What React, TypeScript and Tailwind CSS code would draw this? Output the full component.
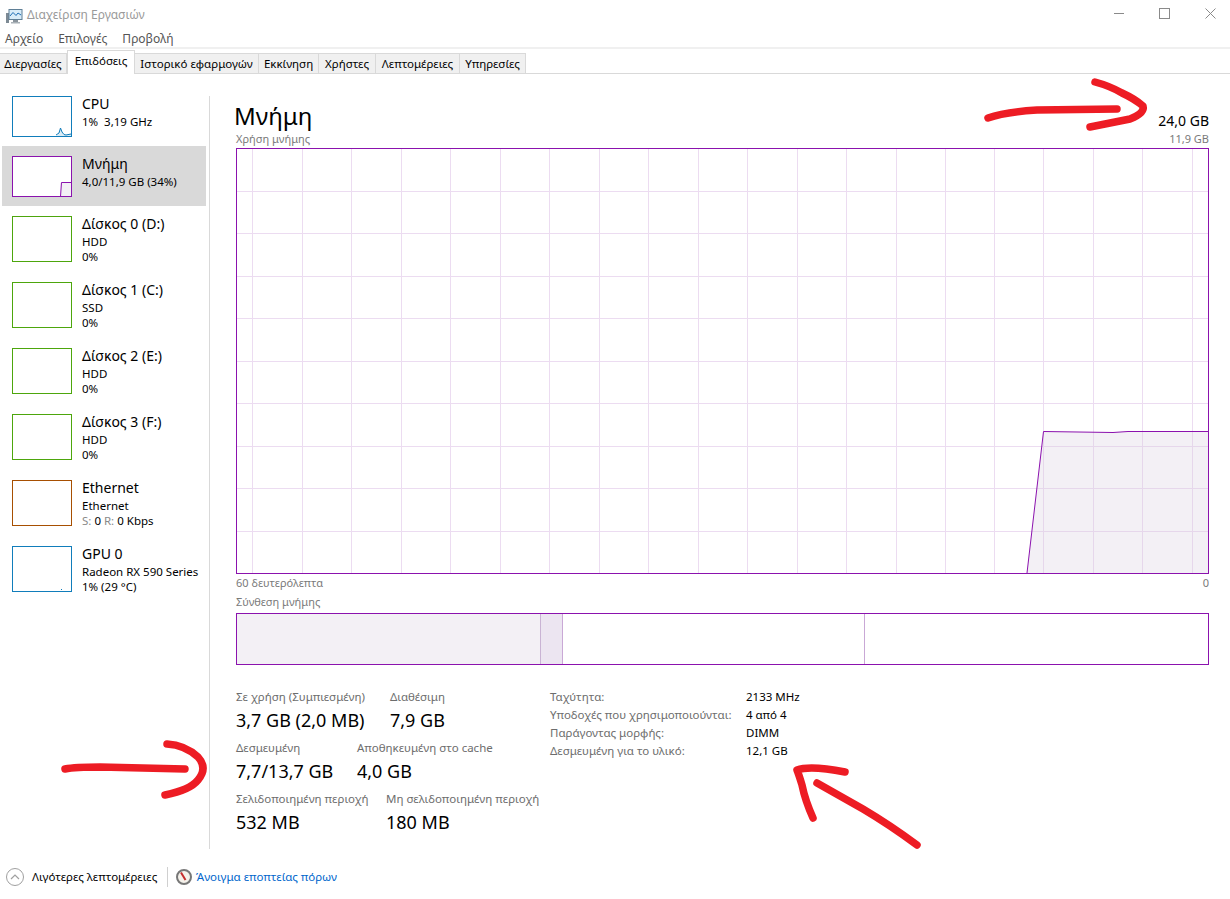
const PURPLE = "#8b12ae";

function Thumb({ color, tall, children }: { color: string; tall?: boolean; children?: React.ReactNode }) {
  return (
    <svg width="60" height={tall ? 46 : 41} className="block shrink-0 bg-white">
      {children}
      <rect x="0.5" y="0.5" width="59" height={tall ? 45 : 40} fill="none" stroke={color} />
    </svg>
  );
}

const rows = [
  { t: "Δίσκος 0 (D:)", a: "HDD", b: "0%", c: "#4da60c" },
  { t: "Δίσκος 1 (C:)", a: "SSD", b: "0%", c: "#4da60c" },
  { t: "Δίσκος 2 (E:)", a: "HDD", b: "0%", c: "#4da60c" },
  { t: "Δίσκος 3 (F:)", a: "HDD", b: "0%", c: "#4da60c" },
];

function SideRow({ t, a, b, c, gpu }: { t: string; a: React.ReactNode; b: React.ReactNode; c: string; gpu?: boolean }) {
  return (
    <div className="flex h-[66px] pt-[10px] pl-[12px]">
      <Thumb color={c} tall>
        {gpu && <rect x="49" y="43" width="1" height="1" fill={c} />}
      </Thumb>
      <div className="ml-[10px] -mt-[1px]">
        <div className="text-[14px] leading-[18px] h-[18px] text-black whitespace-nowrap">{t}</div>
        <div className="text-[11.5px] leading-[15px] h-[15px] mt-[1px] text-black whitespace-nowrap">{a}</div>
        <div className="text-[11.5px] leading-[15px] h-[15px] text-black whitespace-nowrap">{b}</div>
      </div>
    </div>
  );
}

const vLines = [252, 302, 351, 401, 450, 500, 549, 599, 648, 698, 747, 797, 846, 896, 945, 994, 1043, 1093, 1142, 1192];
const hLines = [191, 233, 276, 318, 361, 403, 446, 488, 531];

function Chart() {
  return (
    <svg width="973" height="426" className="block">
      {vLines.map((x) => (
        <line key={x} x1={x - 235.5} x2={x - 235.5} y1="0" y2="426" stroke="#ecdcf1" />
      ))}
      {hLines.map((y) => (
        <line key={y} x1="0" x2="973" y1={y - 147.5} y2={y - 147.5} stroke="#ecdcf1" />
      ))}
      <polygon points="791,425 807.5,283.5 877,284.5 892,283.5 972,283.5 972,425" fill="rgb(215,205,222)" fillOpacity="0.3" />
      <polyline points="791,425 807.5,283.5 877,284.5 892,283.5 972,283.5" fill="none" stroke={PURPLE} />
      <rect x="0.5" y="0.5" width="972" height="425" fill="none" stroke={PURPLE} />
    </svg>
  );
}

function Stat({ label, value, w }: { label: string; value: string; w: string }) {
  return (
    <div className={w}>
      <div className="text-[11.5px] leading-[16px] h-[16px] text-[#6d6d6d] whitespace-nowrap">{label}</div>
      <div className="text-[18px] leading-[30px] h-[30px] text-black whitespace-nowrap">{value}</div>
    </div>
  );
}

const tabs = [
  { t: "Διεργασίες", w: "w-[67px]" },
  { t: "Επιδόσεις", w: "w-[68px]", active: true },
  { t: "Ιστορικό εφαρμογών", w: "w-[124px]" },
  { t: "Εκκίνηση", w: "w-[60px]" },
  { t: "Χρήστες", w: "w-[57px]" },
  { t: "Λεπτομέρειες", w: "w-[84px]" },
  { t: "Υπηρεσίες", w: "w-[66px]" },
];

const info = [
  ["Ταχύτητα:", "2133 MHz"],
  ["Υποδοχές που χρησιμοποιούνται:", "4 από 4"],
  ["Παράγοντας μορφής:", "DIMM"],
  ["Δεσμευμένη για το υλικό:", "12,1 GB"],
];

export default function App() {
  return (
    <div className="relative w-[1230px] h-[899px] overflow-hidden bg-white font-['Noto_Sans',sans-serif]">
      {/* title bar */}
      <div className="flex items-center h-[30px]">
        <svg width="18" height="16" viewBox="0 0 18 16" className="ml-[5px] mt-[1px] shrink-0">
          <rect x="1" y="5" width="3" height="10" fill="#7d8a94" />
          <rect x="3.5" y="1" width="14" height="11" fill="#5f7f96" />
          <rect x="4.5" y="2" width="12" height="9" fill="#d8ecf8" />
          <polyline points="5,8 8,4.5 11,7.5 13,5 16,7" fill="none" stroke="#1f6fb5" strokeWidth="1" />
          <rect x="8" y="12" width="5" height="2" fill="#8a949c" />
          <rect x="6" y="14" width="9" height="1.5" fill="#a9b1b7" />
        </svg>
        <div className="ml-[4px] text-[12px] text-[#9a9a9a] whitespace-nowrap">Διαχείριση Εργασιών</div>
        <div className="flex ml-auto -mr-[3px]">
          <div className="w-[46px] h-[30px] flex items-center justify-center">
            <div className="w-[10px] h-[1px] bg-[#8a8a8a] -mt-[4px]" />
          </div>
          <div className="w-[45px] h-[30px] flex items-center justify-center">
            <div className="w-[11px] h-[11px] border border-[#8a8a8a] -mt-[4px]" />
          </div>
          <div className="w-[46px] h-[30px] flex items-center justify-center">
            <svg width="11" height="11" className="-mt-[4px]">
              <path d="M0.5 0.5L10.5 10.5M10.5 0.5L0.5 10.5" stroke="#8a8a8a" fill="none" />
            </svg>
          </div>
        </div>
      </div>

      {/* menu */}
      <div className="flex items-center h-[17px] pl-[5px] gap-[15px] text-[12px] text-[#555555]">
        <span>Αρχείο</span>
        <span>Επιλογές</span>
        <span>Προβολή</span>
      </div>
      <div className="h-[2px] bg-[#f0f0f0]" />

      {/* tabs */}
      <div className="flex items-end h-[25px] border-b border-[#d9d9d9]">
        {tabs.map((tab) =>
          tab.active ? (
            <div
              key={tab.t}
              className={`${tab.w} relative h-[24px] -mb-[1px] bg-white border border-b-0 border-[#d9d9d9] flex items-start justify-center pt-[2px] text-[11.5px] leading-[16px] text-black whitespace-nowrap`}
            >
              {tab.t}
            </div>
          ) : (
            <div
              key={tab.t}
              className={`${tab.w} h-[20px] bg-[#f0f0f0] border-t border-r border-[#d9d9d9] flex items-center justify-center text-[11.5px] text-black whitespace-nowrap`}
            >
              {tab.t}
            </div>
          )
        )}
      </div>

      {/* body */}
      <div className="flex h-[784px]">
        <div className="w-[210px] h-[753px] mt-[22px] border-r border-[#d9d9d9] shrink-0">
          <div className="flex h-[50px] pl-[12px]">
            <Thumb color="#117dbb">
              <path d="M44 39L47 37L48.500 32L50 36L52 38.500L54 39L59 38" fill="none" stroke="#117dbb" />
              <path d="M44 40L47 37L48.500 32L50 36L52 38.500L54 39L59 38V40Z" fill="#117dbb" fillOpacity="0.15" />
            </Thumb>
            <div className="ml-[10px] -mt-[1px]">
              <div className="text-[14px] leading-[18px] h-[18px] text-black">CPU</div>
              <div className="text-[11.5px] leading-[16px] mt-[1px] text-black whitespace-nowrap">1%&nbsp; 3,19 GHz</div>
            </div>
          </div>
          <div className="flex h-[60px] ml-[2px] w-[204px] bg-[#d9d9d9] pt-[10px] pl-[10px]">
            <Thumb color={PURPLE}>
              <rect x="48.500" y="26.500" width="11" height="14" fill="#f3f0f5" />
              <path d="M48.500 40.500L49.500 26.500H59.500" fill="none" stroke={PURPLE} />
            </Thumb>
            <div className="ml-[10px] -mt-[1px]">
              <div className="text-[14px] leading-[18px] h-[18px] text-black">Μνήμη</div>
              <div className="text-[11.5px] leading-[16px] mt-[1px] text-black whitespace-nowrap">4,0/11,9 GB (34%)</div>
            </div>
          </div>
          {rows.map((r) => (
            <SideRow key={r.t} {...r} />
          ))}
          <SideRow
            t="Ethernet"
            a="Ethernet"
            c="#a74f01"
            b={
              <>
                <span className="text-[#8a8a8a]">S:</span> 0 <span className="text-[#8a8a8a]">R:</span> 0 Kbps
              </>
            }
          />
          <SideRow t="GPU 0" a="Radeon RX 590 Series" b="1% (29 °C)" c="#117dbb" gpu />
        </div>

        <div className="ml-[26px] w-[973px] mt-[22px]">
          <div className="flex items-end justify-between h-[34px]">
            <div className="-ml-[2px] text-[24px] leading-[30px] -mb-[1px] text-black">Μνήμη</div>
            <div className="text-[14px] leading-[20px] -mb-[1px] text-black">24,0 GB</div>
          </div>
          <div className="flex justify-between items-center h-[18px] text-[11px] text-[#7a7a7a]">
            <span>Χρήση μνήμης</span>
            <span>11,9 GB</span>
          </div>
          <Chart />
          <div className="flex justify-between items-center h-[18px] text-[11px] text-[#7a7a7a]">
            <span>60 δευτερόλεπτα</span>
            <span>0</span>
          </div>
          <div className="flex items-center h-[21px] text-[11px] text-[#7a7a7a]">Σύνθεση μνήμης</div>
          <div className="flex h-[52px] border border-[#8b12ae]">
            <div className="w-[304px] bg-[#f3f0f5] border-r border-[#c9b3d4]" />
            <div className="w-[22px] bg-[#ece5f1] border-r border-[#c9a8d6]" />
            <div className="w-[302px] border-r border-[#c9a8d6]" />
          </div>

          <div className="flex mt-[24px]">
            <div className="w-[314px] shrink-0">
              <div className="flex h-[51px]">
                <Stat label="Σε χρήση (Συμπιεσμένη)" value="3,7 GB (2,0 MB)" w="w-[154px]" />
                <Stat label="Διαθέσιμη" value="7,9 GB" w="w-[100px]" />
              </div>
              <div className="flex h-[51px]">
                <Stat label="Δεσμευμένη" value="7,7/13,7 GB" w="w-[121px]" />
                <Stat label="Αποθηκευμένη στο cache" value="4,0 GB" w="w-[140px]" />
              </div>
              <div className="flex h-[51px]">
                <Stat label="Σελιδοποιημένη περιοχή" value="532 MB" w="w-[150px]" />
                <Stat label="Μη σελιδοποιημένη περιοχή" value="180 MB" w="w-[150px]" />
              </div>
            </div>
            <div className="-mt-[1px]">
              {info.map(([k, v]) => (
                <div key={k} className="flex h-[18px] items-center text-[11.5px] whitespace-nowrap">
                  <div className="w-[196px] text-[#6d6d6d]">{k}</div>
                  <div className="text-black">{v}</div>
                </div>
              ))}
            </div>
          </div>
        </div>
      </div>

      {/* footer */}
      <div className="absolute left-0 bottom-[3px] flex items-center h-[38px] w-full">
        <svg width="20" height="20" className="ml-[5px] shrink-0">
          <circle cx="10" cy="10" r="8.500" fill="none" stroke="#a0a0a0" />
          <path d="M6 12L10 8L14 12" fill="none" stroke="#a0a0a0" strokeWidth="1.200" />
        </svg>
        <div className="ml-[7px] w-[135px] text-[11.5px] text-black whitespace-nowrap">Λιγότερες λεπτομέρειες</div>
        <div className="w-[1px] h-[20px] bg-[#d0d0d0]" />
        <svg width="18" height="18" className="ml-[7px] shrink-0">
          <circle cx="9" cy="9" r="7" fill="#f4f1ea" stroke="#777777" strokeWidth="2" />
          <path d="M6 4.500L10.500 12" stroke="#c42b2b" strokeWidth="2" fill="none" />
        </svg>
        <div className="ml-[3px] text-[11.5px] text-[#0066cc] whitespace-nowrap">Άνοιγμα εποπτείας πόρων</div>
      </div>

      {/* red marker arrows drawn over the screenshot */}
      <svg width="1230" height="899" className="absolute left-0 top-0 pointer-events-none">
        <g fill="none" stroke="#ed1c24" strokeWidth="7.500" strokeLinecap="round" strokeLinejoin="round">
          <path d="M988 118Q1005 112 1037 110L1117 109" />
          <path d="M1095 82Q1110 86 1122 93Q1135 99 1143 106Q1145 113 1130 119Q1115 122 1090 127" />
          <path d="M65 769Q75 767 100 767L185 769" />
          <path d="M167 744Q185 745 198 757Q208 768 198 780Q190 790 165 795" />
          <path d="M817 783L863 809Q890 825 917 845" />
          <path d="M813 818Q805 800 802 785Q799 775 797 770Q810 765 845 772" />
        </g>
      </svg>
    </div>
  );
}
